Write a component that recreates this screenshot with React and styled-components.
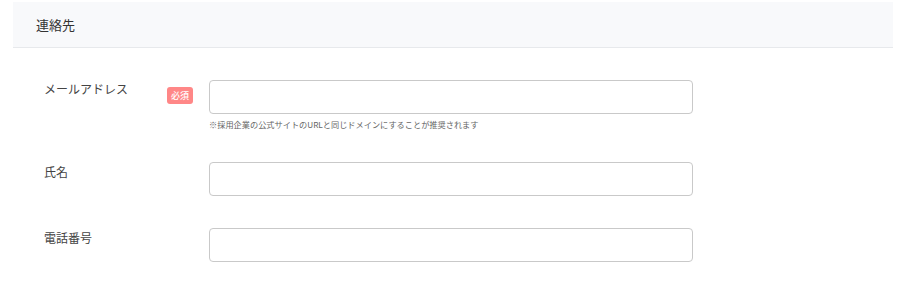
import React from "react";
import styled, { createGlobalStyle } from "styled-components";

const Global = createGlobalStyle`
  html, body { margin: 0; padding: 0; background: #fff; }
  body { font-family: "Noto Sans CJK JP", "Noto Sans", sans-serif; color: #333; }
  * { box-sizing: border-box; }
`;

const Section = styled.section`
  margin: 2px 0 0 13px;
  width: 880px;
`;

const Header = styled.div`
  height: 46px;
  display: flex;
  align-items: center;
  padding-left: 23px;
  background: #f8f9fb;
  border-bottom: 1px solid #e7e9ec;
  font-size: 13px;
  font-weight: 400;
  color: #333;
`;

const Body = styled.div`
  padding: 32px 0 0 31px;
  display: flex;
  flex-direction: column;
  gap: 32px;
`;

const Row = styled.div`
  display: grid;
  grid-template-columns: 123px 42px 484px;
  align-items: start;
`;

const Label = styled.div`
  font-size: 12px;
  line-height: 17px;
  color: #444;
  padding-top: ${(p) => p.$offset || 0}px;
`;

const BadgeCell = styled.div``;

const Badge = styled.span`
  display: inline-flex;
  align-items: center;
  justify-content: center;
  width: 26px;
  height: 17px;
  margin-top: -1px;
  border-radius: 3px;
  background: #ff8787;
  color: #fff;
  font-size: 9px;
  font-weight: 500;
`;

const Field = styled.div`
  display: flex;
  flex-direction: column;
`;

const Input = styled.input`
  width: 484px;
  height: 34px;
  border: 1px solid #c9c9c9;
  border-radius: 4px;
  background: #fff;
  outline: none;
  padding: 0 10px;
  font-size: 13px;
`;

const Hint = styled.div`
  margin-top: 5px;
  font-size: 8.2px;
  line-height: 11px;
  color: #666;
  white-space: nowrap;
`;

export default function App() {
  return (
    <>
      <Global />
      <Section>
        <Header>連絡先</Header>
        <Body>
          <Row>
            <Label>メールアドレス</Label>
            <BadgeCell>
              <Badge>必須</Badge>
            </BadgeCell>
            <Field>
              <Input type="text" />
              <Hint>※採用企業の公式サイトのURLと同じドメインにすることが推奨されます</Hint>
            </Field>
          </Row>
          <Row>
            <Label $offset={1}>氏名</Label>
            <BadgeCell />
            <Field>
              <Input type="text" />
            </Field>
          </Row>
          <Row>
            <Label $offset={1}>電話番号</Label>
            <BadgeCell />
            <Field>
              <Input type="text" />
            </Field>
          </Row>
        </Body>
      </Section>
    </>
  );
}
